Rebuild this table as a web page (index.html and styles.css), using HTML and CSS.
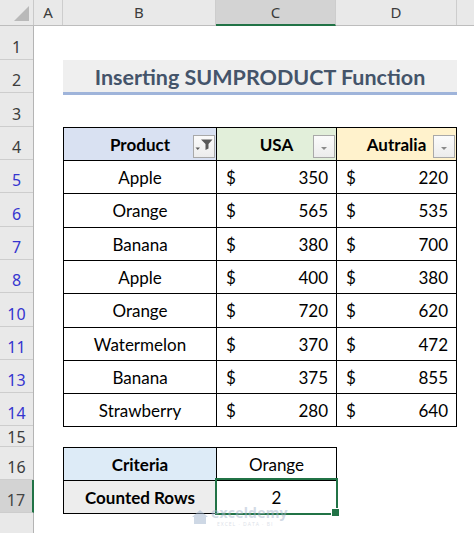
FILE: index.html
```html
<!DOCTYPE html>
<html>
<head>
<meta charset="utf-8">
<link rel="stylesheet" href="styles.css">
</head>
<body>
<div class="app">
  <div class="colheads">
    <div class="corner"><span class="tri"></span></div>
    <div class="colh w-a">A</div>
    <div class="colh w-b">B</div>
    <div class="colh w-c sel">C</div>
    <div class="colh w-d">D</div>
    <div class="colh w-e"></div>
  </div>
  <div class="body">
    <div class="rowheads">
      <div class="rh h34">1</div>
      <div class="rh h33">2</div>
      <div class="rh h34">3</div>
      <div class="rh h33">4</div>
      <div class="rh h33 blue">5</div>
      <div class="rh h34 blue">6</div>
      <div class="rh h33 blue">7</div>
      <div class="rh h33 blue">8</div>
      <div class="rh h34 blue">10</div>
      <div class="rh h33 blue">11</div>
      <div class="rh h33 blue">13</div>
      <div class="rh h33 blue">14</div>
      <div class="rh h21">15</div>
      <div class="rh h33">16</div>
      <div class="rh h33 rsel">17</div>
      <div class="rh h20"></div>
    </div>
    <div class="cells">
      <div class="title">Inserting SUMPRODUCT Function</div>

      <div class="table">
        <div class="c hd prod">Product
          <span class="fbtn">
            <svg width="22" height="23" viewBox="0 0 22 23"><path d="M8 4.5 H19.5 L15.5 9 V13.5 L12.5 15 V9 Z" fill="#5a5a5a"/><path d="M2.5 12.5 H7 L4.75 15 Z" fill="#5a5a5a"/></svg>
          </span>
        </div>
        <div class="c hd usa">USA
          <span class="fbtn">
            <svg width="22" height="23" viewBox="0 0 22 23"><path d="M8 12 H14 L11 15 Z" fill="#8a8a8a"/></svg>
          </span>
        </div>
        <div class="c hd aus">Autralia
          <span class="fbtn">
            <svg width="22" height="23" viewBox="0 0 22 23"><path d="M8 12 H14 L11 15 Z" fill="#8a8a8a"/></svg>
          </span>
        </div>

        <div class="c name">Apple</div><div class="c acc"><span>$</span><span>350</span></div><div class="c acc"><span>$</span><span>220</span></div>
        <div class="c name">Orange</div><div class="c acc"><span>$</span><span>565</span></div><div class="c acc"><span>$</span><span>535</span></div>
        <div class="c name">Banana</div><div class="c acc"><span>$</span><span>380</span></div><div class="c acc"><span>$</span><span>700</span></div>
        <div class="c name">Apple</div><div class="c acc"><span>$</span><span>400</span></div><div class="c acc"><span>$</span><span>380</span></div>
        <div class="c name">Orange</div><div class="c acc"><span>$</span><span>720</span></div><div class="c acc"><span>$</span><span>620</span></div>
        <div class="c name">Watermelon</div><div class="c acc"><span>$</span><span>370</span></div><div class="c acc"><span>$</span><span>472</span></div>
        <div class="c name">Banana</div><div class="c acc"><span>$</span><span>375</span></div><div class="c acc"><span>$</span><span>855</span></div>
        <div class="c name">Strawberry</div><div class="c acc"><span>$</span><span>280</span></div><div class="c acc"><span>$</span><span>640</span></div>
      </div>

      <div class="crit">
        <div class="c hd critlabel">Criteria</div>
        <div class="c name">Orange</div>
        <div class="c hd countlabel">Counted Rows</div>
        <div class="c name active">2</div>
      </div>

      <div class="watermark">
        <svg width="18" height="16" viewBox="0 0 18 16"><path d="M1 8 L9 1 L17 8 L15 8 L15 15 L3 15 L3 8 Z" fill="#9fb3cc"/></svg>
        <div class="wm-text"><span class="wm-main">exceldemy</span><span class="wm-sub">EXCEL · DATA · BI</span></div>
      </div>
    </div>
  </div>
</div>
</body>
</html>
```

FILE: styles.css
```css
* { box-sizing: border-box; }
html, body { margin: 0; padding: 0; }
body {
  width: 474px;
  height: 533px;
  overflow: hidden;
  background: #ffffff;
  font-family: "Lato", "Liberation Sans", sans-serif;
}
.app { width: 474px; height: 533px; display: flex; flex-direction: column; }

.colheads {
  display: flex;
  height: 26px;
  flex: none;
  background: #e9e9e9;
  border-bottom: 1px solid #bdbdbd;
}
.corner {
  width: 34px;
  position: relative;
  border-right: 1px solid #c9c9c9;
}
.tri {
  position: absolute;
  right: 4px;
  bottom: 4px;
  width: 0; height: 0;
  border-left: 15px solid transparent;
  border-bottom: 15px solid #b9b9b9;
}
.colh {
  display: flex;
  align-items: center;
  justify-content: center;
  border-right: 1px solid #cdcdcd;
  font-family: "Noto Sans", "Open Sans", sans-serif;
  font-size: 15px;
  color: #3c3c3c;
  padding-bottom: 1px;
}
.w-a { width: 29px; }
.w-b { width: 153px; }
.w-c { width: 120px; }
.w-d { width: 121px; }
.w-e { flex: 1; border-right: none; }
.colh.sel {
  background: #d3d3d3;
  border-bottom: 2px solid #217346;
  margin-bottom: -1px;
  color: #3a3a3a;
}

.body { display: flex; flex: 1; }
.rowheads {
  width: 34px;
  flex: none;
  display: flex;
  flex-direction: column;
  background: #e9e9e9;
  border-right: 1px solid #b4b4b4;
}
.rh {
  display: flex;
  align-items: flex-end;
  justify-content: center;
  border-bottom: 1px solid #cdcdcd;
  font-family: "Noto Sans", "Open Sans", sans-serif;
  font-size: 16px;
  line-height: 18px;
  padding-bottom: 3px;
  color: #3c3c3c;
}
.h34 { height: 34px; }
.h33 { height: 33px; }
.h21 { height: 21px; padding-bottom: 0; }
.h20 { height: 20px; border-bottom: none; }
.rh.blue { color: #3535cf; }
.rh.rsel {
  background: #d3d3d3;
  border-right: 2px solid #217346;
  margin-right: -1px;
  color: #444;
}

.cells {
  flex: 1;
  position: relative;
  display: grid;
  grid-template-columns: 29px 153px 120px 121px 1fr;
  grid-template-rows: 34px 33px 34px 33px 33px 34px 33px 33px 34px 33px 33px 33px 21px 33px 33px 20px;
}

.title {
  grid-row: 2;
  grid-column: 2 / 5;
  background: #efefef;
  border-bottom: 3px solid #9fb4da;
  color: #44546a;
  font-weight: 700;
  font-size: 21.5px;
  display: flex;
  align-items: center;
  justify-content: center;
  padding-top: 2px;
  margin-bottom: -2px;
}

.table {
  grid-row: 4 / 13;
  grid-column: 2 / 5;
  align-self: start;
  display: grid;
  grid-template-columns: 152px 119px 119px;
  grid-template-rows: 32px 32px 33px 32px 32px 33px 32px 32px 32px;
  gap: 1px;
  padding: 1px;
  background: #000;
  width: 394px;
}
.crit {
  grid-row: 14 / 16;
  grid-column: 2 / 4;
  align-self: start;
  display: grid;
  grid-template-columns: 152px 119px;
  grid-template-rows: 32px 32px;
  gap: 1px;
  padding: 1px;
  background: #000;
  width: 274px;
}

.c {
  background: #fff;
  font-size: 17px;
  color: #000;
  display: flex;
  align-items: center;
  position: relative;
}
.name { justify-content: center; }
.hd { justify-content: center; font-weight: 700; color: #000; }
.prod { background: #d9e1f2; }
.usa { background: #e2efda; }
.aus { background: #fff2cc; }
.critlabel { background: #ddebf7; }
.countlabel { background: #ededed; }
.acc { justify-content: space-between; padding: 0 8px 0 9px; }

.fbtn {
  position: absolute;
  right: 1px;
  bottom: 2px;
  width: 22px;
  height: 23px;
  border: 1px solid #a9a9a9;
  background: linear-gradient(#fbfbfb, #ececec);
}
.fbtn svg { display: block; margin: -1px; }

.active::after {
  content: "";
  position: absolute;
  left: -2px;
  right: -2px;
  top: -3px;
  bottom: -2px;
  border: 2px solid #217346;
}
.active::before {
  content: "";
  position: absolute;
  right: -4px;
  bottom: -4px;
  width: 7px;
  height: 7px;
  background: #217346;
  border: 1px solid #fff;
  z-index: 2;
}

.watermark {
  position: absolute;
  left: 157px;
  top: 480px;
  display: flex;
  align-items: center;
  gap: 2px;
  opacity: 0.5;
  pointer-events: none;
}
.wm-text { display: flex; flex-direction: column; line-height: 1; gap: 2px; }
.wm-main {
  font-family: "Open Sans", sans-serif;
  font-weight: 700;
  font-size: 14px;
  line-height: 14px;
  color: #a7b7cc;
  letter-spacing: 0.2px;
}
.wm-sub {
  font-family: "Open Sans", sans-serif;
  font-size: 5px;
  line-height: 5px;
  color: #b9c4d2;
  letter-spacing: 1px;
  padding-left: 6px;
}
```
